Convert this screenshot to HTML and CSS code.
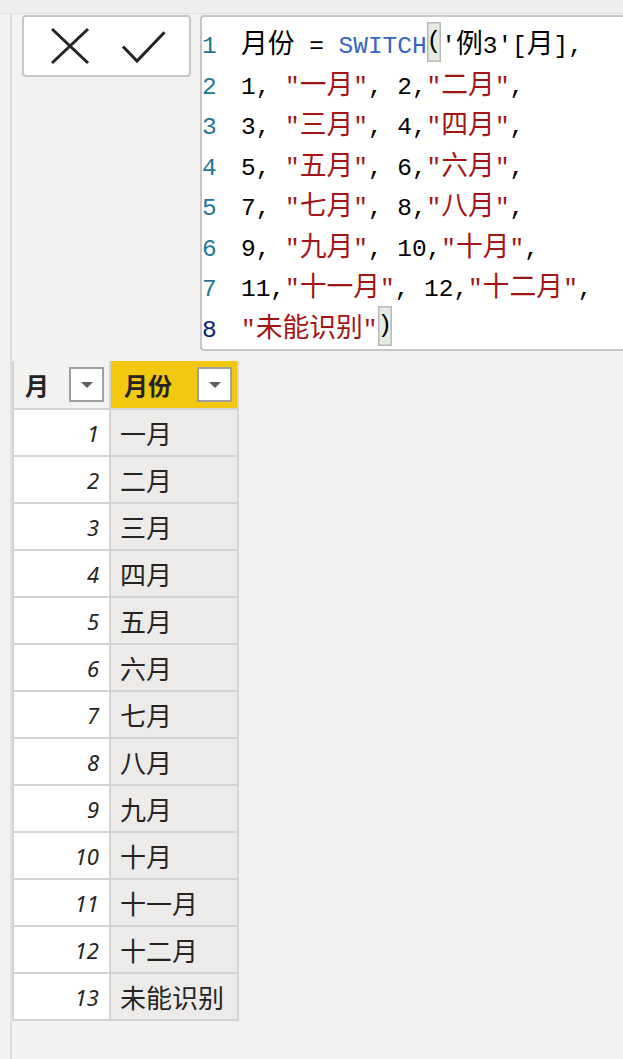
FILE: index.html
```html
<!DOCTYPE html>
<html>
<head>
<meta charset="utf-8">
<link rel="stylesheet" href="styles.css">
</head>
<body>
<div class="topband"></div>
<div class="main">
  <div class="pane">
    <div class="toolbar">
      <div class="btnbox">
        <svg class="btnsvg" viewBox="24 17 165 58" width="165" height="58">
          <path d="M52 29 L88 63 M88 29 L52 63" stroke="#252423" stroke-width="3" fill="none"/>
          <path d="M123 46.5 L137 61 L164.5 32.3" stroke="#252423" stroke-width="3" fill="none"/>
        </svg>
      </div>
      <div class="editor">
        <div class="line"><span class="ln">1</span><span class="code"><span class="c">月份</span> = <span class="kw">SWITCH</span><span class="br">(</span>'<span class="c">例</span>3'[<span class="c">月</span>],</span></div>
        <div class="line"><span class="ln">2</span><span class="code">1, <span class="s">"<span class="c">一月</span>"</span>, 2,<span class="s">"<span class="c">二月</span>"</span>,</span></div>
        <div class="line"><span class="ln">3</span><span class="code">3, <span class="s">"<span class="c">三月</span>"</span>, 4,<span class="s">"<span class="c">四月</span>"</span>,</span></div>
        <div class="line"><span class="ln">4</span><span class="code">5, <span class="s">"<span class="c">五月</span>"</span>, 6,<span class="s">"<span class="c">六月</span>"</span>,</span></div>
        <div class="line"><span class="ln">5</span><span class="code">7, <span class="s">"<span class="c">七月</span>"</span>, 8,<span class="s">"<span class="c">八月</span>"</span>,</span></div>
        <div class="line"><span class="ln">6</span><span class="code">9, <span class="s">"<span class="c">九月</span>"</span>, 10,<span class="s">"<span class="c">十月</span>"</span>,</span></div>
        <div class="line"><span class="ln">7</span><span class="code">11,<span class="s">"<span class="c">十一月</span>"</span>, 12,<span class="s">"<span class="c">十二月</span>"</span>,</span></div>
        <div class="line"><span class="ln active">8</span><span class="code"><span class="s">"<span class="c">未能识别</span>"</span><span class="br">)</span></span></div>
      </div>
    </div>
    <div class="grid">
      <div class="hcell h1"><span class="htext">月</span><span class="dd"><span class="tri"></span></span></div>
      <div class="hcell h2"><span class="htext">月份</span><span class="dd"><span class="tri"></span></span></div>
      <div class="num">1</div><div class="txt">一月</div>
      <div class="num">2</div><div class="txt">二月</div>
      <div class="num">3</div><div class="txt">三月</div>
      <div class="num">4</div><div class="txt">四月</div>
      <div class="num">5</div><div class="txt">五月</div>
      <div class="num">6</div><div class="txt">六月</div>
      <div class="num">7</div><div class="txt">七月</div>
      <div class="num">8</div><div class="txt">八月</div>
      <div class="num">9</div><div class="txt">九月</div>
      <div class="num">10</div><div class="txt">十月</div>
      <div class="num">11</div><div class="txt">十一月</div>
      <div class="num">12</div><div class="txt">十二月</div>
      <div class="num">13</div><div class="txt">未能识别</div>
    </div>
  </div>
</div>
</body>
</html>
```

FILE: styles.css
```css
html, body {
  margin: 0;
  padding: 0;
  background: #f3f2f1;
  overflow: hidden;
  width: 623px;
  height: 1059px;
}
.topband {
  height: 13px;
  background: #efeeed;
  border-bottom: 1px solid #e3e2e1;
}
.main {
  padding-left: 10px;
}
.pane {
  border-left: 2px solid #e1dfdd;
  height: 1045px;
  box-sizing: border-box;
  padding-top: 1px;
}
.toolbar {
  display: flex;
  align-items: flex-start;
}
.btnbox {
  margin-left: 10px;
  width: 165px;
  height: 58px;
  border: 2px solid #c8c6c4;
  border-radius: 4px;
  background: #ffffff;
  flex: none;
}
.btnsvg {
  display: block;
}
.editor {
  margin-left: 9px;
  flex: 1;
  min-width: 0;
  height: 327px;
  border: 2px solid #c8c6c4;
  border-right: none;
  border-radius: 4px 0 0 4px;
  background: #ffffff;
  padding-top: 5px;
  font-family: "Liberation Mono", monospace;
  font-size: 24.45px;
  line-height: 40.5px;
  color: #000000;
  overflow: hidden;
}
.line {
  display: flex;
  align-items: baseline;
  height: 40.5px;
}
.ln {
  width: 39px;
  flex: none;
  color: #237893;
}
.ln.active {
  color: #0b216f;
}
.code {
  white-space: pre;
}
.c {
  font-family: "Noto Sans CJK SC", sans-serif;
  font-size: 26.8px;
}
.s {
  color: #a31515;
}
.kw {
  color: #3566c2;
}
.br {
  display: inline-block;
  height: 40px;
  line-height: 40px;
  vertical-align: top;
  background: #e4ebe1;
  box-shadow: inset 0 0 0 1.5px #b9b9b9;
}
.grid {
  margin-top: 10px;
  display: grid;
  grid-template-columns: 95px 126px;
  grid-auto-rows: 45px;
  grid-template-rows: 47px;
  gap: 2px;
  width: 227px;
  padding: 0 2px 2px 2px;
  box-sizing: border-box;
  background: #d6d4d2;
  font-family: "Noto Sans CJK SC", sans-serif;
  color: #252423;
}
.hcell {
  display: flex;
  align-items: center;
  justify-content: space-between;
  padding-right: 5px;
}
.h1 {
  background: #f3f2f1;
  padding-left: 11px;
}
.h2 {
  background: #f2c811;
  padding-left: 13px;
}
.htext {
  font-size: 24px;
  font-weight: 700;
}
.dd {
  width: 31px;
  height: 31px;
  border: 2px solid #a19f9d;
  background: #ffffff;
  display: flex;
  align-items: center;
  justify-content: center;
}
.tri {
  width: 0;
  height: 0;
  border-left: 6px solid transparent;
  border-right: 6px solid transparent;
  border-top: 6px solid #605e5c;
  margin-top: 1px;
}
.num {
  background: #ffffff;
  font-family: "Noto Sans", sans-serif;
  font-style: italic;
  font-size: 22px;
  display: flex;
  align-items: center;
  justify-content: flex-end;
  padding-right: 10px;
}
.txt {
  background: #edebe9;
  font-size: 26px;
  display: flex;
  align-items: center;
  padding-left: 9px;
}
```
